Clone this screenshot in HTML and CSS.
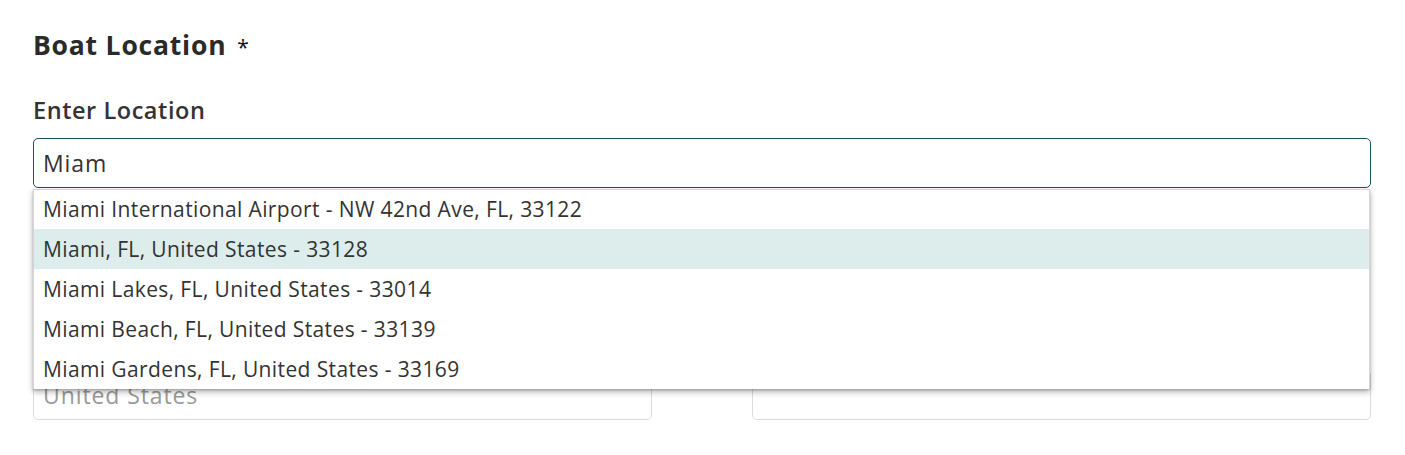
FILE: index.html
```html
<!DOCTYPE html>
<html lang="en">
<head>
<meta charset="utf-8">
<title>Boat Location</title>
<link rel="stylesheet" href="styles.css">
</head>
<body>
<section class="location">
  <h2 class="title">Boat Location <span class="req">*</span></h2>
  <label class="label" for="loc">Enter Location</label>
  <div class="autocomplete">
    <input id="loc" class="field field-active" type="text" value="Miam">
    <ul class="suggestions">
      <li class="suggestion">Miami International Airport - NW 42nd Ave, FL, 33122</li>
      <li class="suggestion is-active">Miami, FL, United States - 33128</li>
      <li class="suggestion">Miami Lakes, FL, United States - 33014</li>
      <li class="suggestion">Miami Beach, FL, United States - 33139</li>
      <li class="suggestion">Miami Gardens, FL, United States - 33169</li>
    </ul>
  </div>
  <div class="row">
    <input class="field" type="text" aria-label="Country" placeholder="United States">
    <input class="field" type="text" aria-label="Zip Code">
  </div>
</section>
</body>
</html>
```

FILE: styles.css
```css
* { box-sizing: border-box; }
html, body { margin: 0; padding: 0; background: #fff; }
body {
  font-family: "Open Sans", "Noto Sans", sans-serif;
  color: #333;
}
.location {
  width: 1405px;
  padding: 28px 34px 0 33px;
}
.title {
  margin: 0 0 34px;
  font-size: 26.5px;
  line-height: 34px;
  font-weight: 700;
  letter-spacing: 0.8px;
  color: #2a2a2a;
}
.req {
  font-weight: 400;
  font-size: 21px;
  line-height: 1;
  letter-spacing: 0;
  color: #111;
  margin-left: 3px;
}
.label {
  display: block;
  font-size: 23.5px;
  font-weight: 600;
  letter-spacing: 0.55px;
  line-height: 28px;
  color: #333;
  margin-bottom: 14px;
}
.autocomplete { position: relative; }
.field {
  display: block;
  width: 100%;
  height: 50px;
  padding: 0 9px;
  border: 1px solid #dcdcdc;
  border-radius: 5px;
  font-family: inherit;
  font-size: 23px;
  letter-spacing: 0.9px;
  color: #333;
  background: #fff;
  outline: none;
}
.field::placeholder { color: #9a9a9a; }
.field-active { border-color: #1f5262; }
.suggestions {
  position: absolute;
  left: 0;
  right: 1px;
  top: 51px;
  margin: 0;
  padding: 0;
  list-style: none;
  background: #fff;
  border: 1px solid #d6d6d6;
  border-bottom: none;
  box-shadow: 0 3px 6px rgba(0,0,0,0.3), 0 1px 2px rgba(0,0,0,0.18);
  z-index: 5;
}
.suggestion {
  height: 40px;
  line-height: 40px;
  padding: 0 9px;
  font-size: 21px;
  letter-spacing: 0.38px;
  color: #333;
  white-space: nowrap;
}
.suggestion:first-child { height: 39px; line-height: 39px; }
.suggestion.is-active { background: #ddedeb; }
.row {
  display: grid;
  grid-template-columns: 1fr 1fr;
  column-gap: 100px;
  margin-top: 182px;
}
```
